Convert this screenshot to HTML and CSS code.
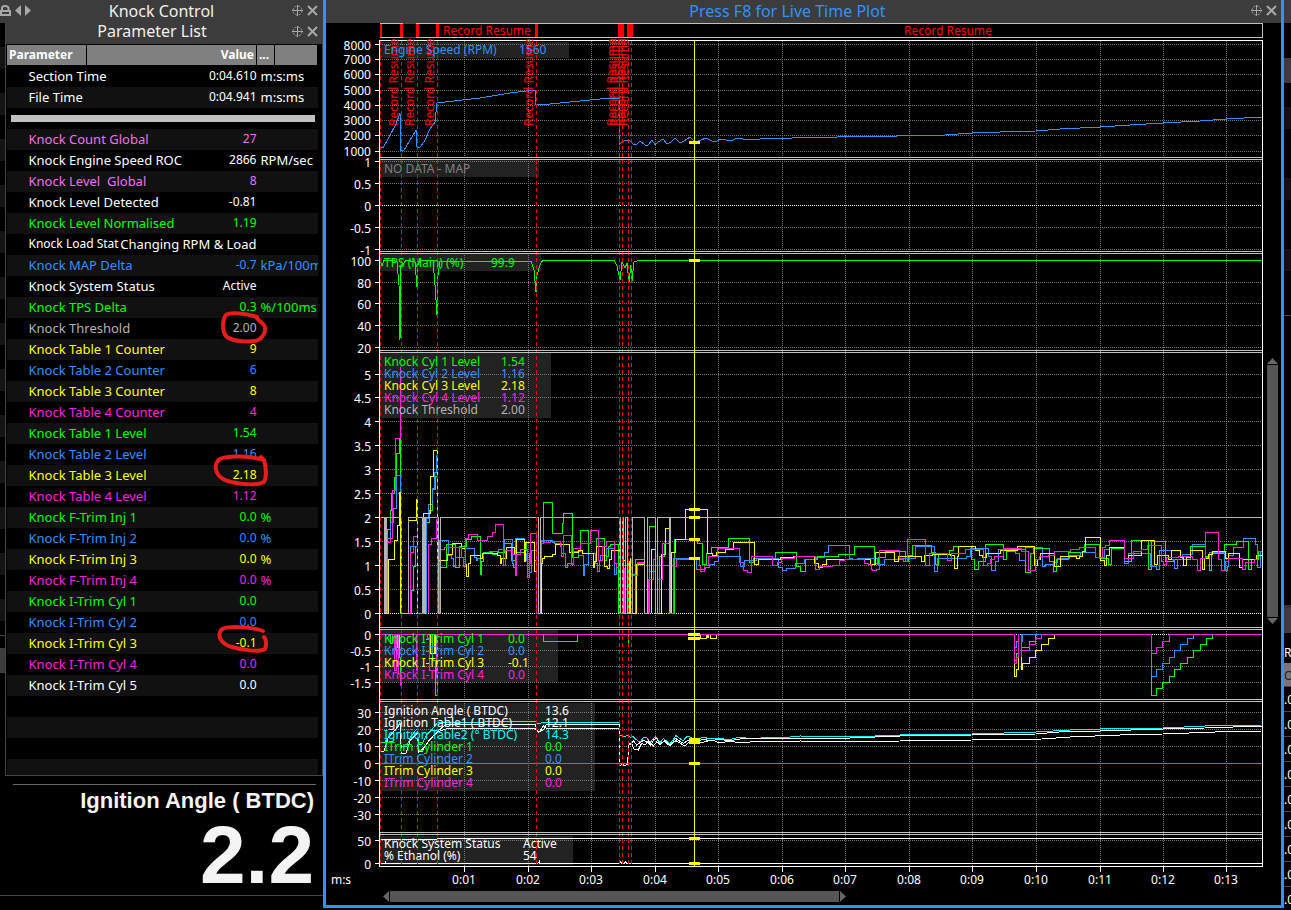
FILE: index.html
```
<!DOCTYPE html>
<html lang="en">
<head>
<meta charset="utf-8">
<title>Knock Control</title>
<link rel="stylesheet" href="styles.css">
</head>
<body>
<svg class="defs" aria-hidden="true">
  <symbol id="move" viewBox="0 0 11 11"><circle cx="5.5" cy="5.5" r="4.5" stroke-dasharray="2 1.5"/><path d="M5.5 0V11M0 5.5H11"/></symbol>
  <symbol id="close" viewBox="0 0 11 11"><path class="thick" d="M1 1L10 10M10 1L1 10"/></symbol>
</svg>
<div class="app">
  <aside class="side">
    <header class="bar">
      <span class="nav">
        <button aria-label="Lock"><svg class="icon" viewBox="0 0 11 11"><path class="thick" d="M2 5V3Q2 1 5 1T8.500 3V5"/><path class="solid" d="M0 5H11V11H0ZM2 7V9H9V7Z" fill-rule="evenodd"/></svg></button>
        <button aria-label="Previous"><svg class="arrow" viewBox="0 0 6 11"><path class="solid" d="M6 0V11L0 5.500Z"/></svg></button>
        <button aria-label="Next"><svg class="arrow" viewBox="0 0 6 11"><path class="solid" d="M0 0V11L6 5.500Z"/></svg></button>
      </span>
      <h1>Knock Control</h1>
      <span class="tools"><button aria-label="Move"><svg class="icon"><use href="#move"/></svg></button><button aria-label="Close"><svg class="icon"><use href="#close"/></svg></button></span>
    </header>
    <div class="side-body">
      <div class="sliver"></div>
      <div class="side-main">
        <section class="params">
          <header class="bar sub">
            <span></span>
            <h2>Parameter List</h2>
            <span class="tools"><button aria-label="Move list"><svg class="icon"><use href="#move"/></svg></button><button aria-label="Close list"><svg class="icon"><use href="#close"/></svg></button></span>
          </header>
          <table class="list">
            <colgroup><col class="c1"><col><col class="c3"><col class="c4"></colgroup>
            <thead><tr><th>Parameter</th><th class="right">Value</th><th>...</th><th></th></tr></thead>
            <tbody>
              <tr><td>Section Time</td><td>0:04.610</td><td colspan="2">m:s:ms</td></tr>
              <tr><td>File Time</td><td>0:04.941</td><td colspan="2">m:s:ms</td></tr>
              <tr><td colspan="4" class="sep"><hr></td></tr>
              <tr class="violet"><td>Knock Count Global</td><td>27</td><td colspan="2"></td></tr>
              <tr><td>Knock Engine Speed ROC</td><td>2866</td><td colspan="2">RPM/sec</td></tr>
              <tr class="violet"><td>Knock Level&nbsp; Global</td><td>8</td><td colspan="2"></td></tr>
              <tr><td>Knock Level Detected</td><td>-0.81</td><td colspan="2"></td></tr>
              <tr class="green"><td>Knock Level Normalised</td><td>1.19</td><td colspan="2"></td></tr>
              <tr class="wide-value"><td>Knock Load Stat</td><td>Changing RPM &amp; Load</td><td colspan="2"></td></tr>
              <tr class="blue"><td>Knock MAP Delta</td><td>-0.7</td><td colspan="2">kPa/100ms</td></tr>
              <tr><td>Knock System Status</td><td>Active</td><td colspan="2"></td></tr>
              <tr class="green"><td>Knock TPS Delta</td><td>0.3</td><td colspan="2">%/100ms</td></tr>
              <tr class="grey"><td>Knock Threshold</td><td>2.00</td><td colspan="2"></td></tr>
              <tr class="yellow"><td>Knock Table 1 Counter</td><td>9</td><td colspan="2"></td></tr>
              <tr class="blue"><td>Knock Table 2 Counter</td><td>6</td><td colspan="2"></td></tr>
              <tr class="yellow"><td>Knock Table 3 Counter</td><td>8</td><td colspan="2"></td></tr>
              <tr class="magenta"><td>Knock Table 4 Counter</td><td>4</td><td colspan="2"></td></tr>
              <tr class="green"><td>Knock Table 1 Level</td><td>1.54</td><td colspan="2"></td></tr>
              <tr class="blue"><td>Knock Table 2 Level</td><td>1.16</td><td colspan="2"></td></tr>
              <tr class="yellow"><td>Knock Table 3 Level</td><td>2.18</td><td colspan="2"></td></tr>
              <tr class="magenta"><td>Knock Table 4 Level</td><td>1.12</td><td colspan="2"></td></tr>
              <tr class="green"><td>Knock F-Trim Inj 1</td><td>0.0</td><td colspan="2">%</td></tr>
              <tr class="blue"><td>Knock F-Trim Inj 2</td><td>0.0</td><td colspan="2">%</td></tr>
              <tr class="yellow"><td>Knock F-Trim Inj 3</td><td>0.0</td><td colspan="2">%</td></tr>
              <tr class="magenta"><td>Knock F-Trim Inj 4</td><td>0.0</td><td colspan="2">%</td></tr>
              <tr class="green"><td>Knock I-Trim Cyl 1</td><td>0.0</td><td colspan="2"></td></tr>
              <tr class="blue"><td>Knock I-Trim Cyl 2</td><td>0.0</td><td colspan="2"></td></tr>
              <tr class="yellow"><td>Knock I-Trim Cyl 3</td><td>-0.1</td><td colspan="2"></td></tr>
              <tr class="magenta"><td>Knock I-Trim Cyl 4</td><td>0.0</td><td colspan="2"></td></tr>
              <tr><td>Knock I-Trim Cyl 5</td><td>0.0</td><td colspan="2"></td></tr>
              <tr><td colspan="4"></td></tr>
              <tr><td colspan="4"></td></tr>
              <tr><td colspan="4"></td></tr>
              <tr class="short"><td colspan="4"></td></tr>
            </tbody>
          </table>
          <svg class="marks" viewBox="206 300 70 360" aria-hidden="true">
            <path d="M257 317C245 313 230 312 226 315C222 320 222 333 227 337C234 342 255 343 260 339C266 333 267 327 262 323C258 320 257 318 256 317"/>
            <path d="M261 457L264 460C266 467 267 477 264 482C254 487 230 483 223 479C215 474 213 464 220 459C229 455 251 456 264 460"/>
            <path d="M263 631C250 626 225 626 221 630C216 638 224 645 232 647C245 651 260 652 265 649C267 644 266 639 264 637"/>
          </svg>
        </section>
        <section class="gauge">
          <h2>Ignition Angle ( BTDC)</h2>
          <output>2.2</output>
        </section>
      </div>
    </div>
    <div class="side-foot"></div>
  </aside>

  <main class="window">
    <header class="bar">
      <span></span>
      <h1 class="live">Press F8 for Live Time Plot</h1>
      <span class="tools"><button aria-label="Move plot"><svg class="icon"><use href="#move"/></svg></button><button aria-label="Close plot"><svg class="icon"><use href="#close"/></svg></button></span>
    </header>
    <div class="plot-row">
      <svg class="plot" viewBox="326 23 938 866" role="img" aria-label="Time plot">
        <g class="shade">
          <path d="M380 42H569V58H380ZM380 160H539V177H380ZM380 254H541V271H380ZM380 353H551V418H380ZM380 630H558V682H380ZM380 703H595V791H380ZM380 836H573V865H380Z"/>
        </g>
        <path class="grid" d="M380 44.500H1262M380 59.500H1262M380 74.500H1262M380 90.500H1262M380 105.500H1262M380 120.500H1262M380 135.500H1262M380 151.500H1262M380 161.500H1262M380 183.500H1262M380 227.500H1262M380 249.500H1262M380 282.500H1262M380 303.500H1262M380 325.500H1262M380 347.500H1262M380 374.500H1262M380 397.500H1262M380 421.500H1262M380 445.500H1262M380 469.500H1262M380 493.500H1262M380 541.500H1262M380 565.500H1262M380 589.500H1262M380 650.500H1262M380 666.500H1262M380 682.500H1262M380 712.500H1262M380 729.500H1262M380 746.500H1262M380 780.500H1262M380 797.500H1262M380 814.500H1262M380 840.500H1262"/>
        <path class="grid" d="M464.500 41V866M528.500 41V866M591.500 41V866M655.500 41V866M718.500 41V866M782.500 41V866M845.500 41V866M909.500 41V866M972.500 41V866M1036.500 41V866M1100.500 41V866M1163.500 41V866M1226.500 41V866"/>
        <path class="zero" d="M380 205.500H1262M380 613.500H1262M380 634.500H1262"/>

        <g class="line">
          <path class="blue" d="M380 147L383 148L388 139L396 124L400 113L401 150L404 150L409 142L416 130L417 147L420 147L424 142L430 129L435 122L437 103L445 102L480 98L510 93L535 90L536 105L550 104L580 101L600 99L619 98L620 144L624 141L629 140L633 144L636 145L640 141L645 145L648 145L652 140L655 145L658 142L663 139L667 144L671 142L675 138L680 143L684 141L690 137L695 142L701 140L706 138L714 142L722 139L730 141L738 138L748 140L760 139L775 138L785 139L800 137L825 138L850 136L880 137L915 135L945 135L972 133L1000 132L1036 131L1060 129L1100 127L1130 125L1163 123L1200 121L1226 119L1262 117"/>
          <path class="green" d="M380 260L382 266L384 260H393L397 262L399 285L400 340L401 265L404 263L406 260L415 262L417 287L418 265L421 260H433L435 285L437 315L438 275L440 261H531L534 270L536 292L537 275L540 265L543 260H614L617 266L620 280L622 262L625 268L627 263L629 282L631 265L632 281L634 262L640 260H1262"/>
          <path class="magenta" d="M400.500 367V614"/>
        </g>

        <svg x="360" y="420" width="330" height="210" viewBox="0 0 990 630" class="line">
          <path class="green" d="M75 580H82V328H90V272H95V220H103V172H110V100H119V55H122V580H155V510H160V438H167V380H172V580H198V306H207V270H218V208H226V170H232V442H258V374H286V442H297V380H318V358H334V348H361V463H364V424H369V398H397V404H412V398H434V370H455V422H465V398H492V390H500V366H524V420H530V580H541V370H550V247H577V340H607V310H610V280H637V412H655V394H661V331H686V400H709V355H733V422H738V408H744V378H751V373H776V580M804 580V424H811V580H826V418H853M868 580V319H886M898 580V408H913V370H930V580H943V358H990"/>
          <path class="blue" d="M80 580V355H92V306H101V265H110V166H120V580M150 580V380H172V580M200 580V295H206V253H217V206H223V156H228V106H232V580M238 580V361H266V407H274V415H280V439H286V412H316V385H343V412H349V421H353V415H370V400H388V394H416V388H433V358H457V430H460V442H466V355H494V420H500V400H508V457H514V390H528V580H544V361H577V367H583V370H604V400H616V442H622V430H640V395H655V405H670V466H674V433H686V400H705V430H712V454H718V420H722V406H740V386H763V463H770V430H778V580H817V463H832V430H853M868 580V454H886M898 580V436H928V580H940V415H990"/>
          <path class="yellow" d="M72 580H86V418H103V360H112V316H118V217H120V580M122 580V217M146 580V301H169V238H172V580M190 580V280H210V169H220V91H232V422H263V403H277V370H304V385H316V433H320V469H325V430H331V406H361V415H367V400H412V406H421V430H424V415H440V382H464V403H469V358H494V424H497V367H524V455H530V580H544V430H547V415H553V409H577V403H586V373H628V397H655V391H668V400H701V442H704V424H709V379H734V439H741V445H747V418H755V391H778V580M787 376V580M789 420H797V580M807 424V580M811 415V580M814 580H829V433H853M874 580V388H886M892 580H904V404H916V325H928V580H935V397H947V358H976V268H990"/>
          <path class="magenta" d="M82 367H90V355H97V211H107V55H122M152 580V397H160V349H172M206 580V373H214V355H229V298H235V388H253V382H304V412H310V439H316V355H325V343H352V361H382V349H397V337H406V313H431V436H437V391H458V403H466V466H470V403H480V389H502V472H508V430H511V340H529V580H541V430V370H550V367H571V364H600V380H604V409H610V346H635V433H640V385H662V370H691V331H716V420H727V380H740V364H763V430H770V442H778V580H782M792 580V445H796V580M801 580V460M820 466H832V427H853M865 580V478H880V418H886M892 478H908V370H928V580H940V439H950V418H990"/>
          <path class="grey" d="M60 292H72V580M75 292V580M78 292V580M78 292H124V580H146V292H187V580M190 292V580M193 292V580H196V292H235V580H241V292H535V580H541V292H778V580M781 292V580M786 580V292M790 292V580H797V292H802V580H817V292H853V580H862V292H886V580H892V292H928V580M931 580V292H990"/>
        </svg>
        <svg x="690" y="440" width="280" height="260" viewBox="150 0 840 780" class="line">
          <path class="green" d="M150 298H172V310H187V373H199V340H214V322H265V295H328V367H341V355H406V337H469V379H481V394H496V358H532V349H595V343H643V319H703V370H715V352H736V334H796V364H805V346H817V316H874V338H886V373H895V343H928V331H940V319H990"/>
          <path class="blue" d="M150 355H169V388H196V382H208V373H223V364H235V349H301V379H313V361H349V355H415V382H427V391H439V385H466V370H493V358H530V352H553V337H565V316H628V355H640M652 355H712V373H733V358H790V355H826V319H883V394H892V355H979V349H990"/>
          <path class="yellow" d="M150 208H202V340H217V346H229V337H256V328H280V307H343V373H355V358H421V352H460V349H523V370H535V382H547V373H559V358H691V373H706V337H763V364H775V349H844V364H853V346H877V343H931V346H943V385H952V349H955V319H990M181 583V595H200V583M203 583V595M206 583V595M211 583V595H229V583"/>
          <path class="magenta" d="M150 358H178V376H181V394H193V376H205V349H232V325H298V367H310V391H322V397H334V349H397V376H412V367H424V355H463V349H526V388H538V379H577V376H598V361H613V358H673V370H685V373H694V388H697V391H709V388H718V331H778V355H790V364H802V298H856V376H868V340H922V361H934V340H976V328H990"/>
        </svg>
        <svg x="970" y="500" width="292" height="220" viewBox="30 0 876 660" class="line">
          <path class="green" d="M30 139H34V178H43V208H55V184H76V133H130V178H139V154H150V148H196V217H211V160H220V145H268V184H280V214H290V178H325V157H373V133H418V175H445V193H453V145H494V184H514V121H565V208H574V124H616V184H640V178H691V139H736V170H748V211H754V160H793V133H829V124H865V208H874V178H895V154H905"/>
          <path class="blue" d="M30 169H32V145H85V170H94V211H106V184H115V148H150V154H165V160H178V181H196V142H247V199H257V193H280V187H292V175H328V166H361V157H406V172H432V148H448V142H492V190H504V160H571V199H589V208H598V151H634V178H643V205H652V178H668V163H697V133H736V172H748V157H793V211H802V200H805V166H820V142H850V115H886V134H892V202H901V154H905"/>
          <path class="yellow" d="M30 139H46V152H58V166H68V172H79V160H121V151H172V139H224V196H233V178H242V160H283V199H301V169H349V175H358V169H367V154H376V112H421V181H432V196H439V166H448V142H494V175H506V166H544V121H583V193H592V166H625V178H634V151H661V172H670V196H679V172H691V151H727V208H733V175H745V163H757V154H796V175H805V160H838V202H847V178H889V166H905"/>
          <path class="magenta" d="M30 148H70V196H83V190H91V178H103V169H130V145H185V154H205V211H226V178H238V169H265V166H283V154H331V148H358V142H406V172H427V142H436V136H448V121H493V175H520V154H544V148H562V136H604V184H610V193H619V172H655V169H697V178H712V211H721V175H736V97H776V178H784V211H796V184H805V175H847V208H856V187H883V178H892V154H905"/>
          <path class="yellow" d="M163 403V529H169V508H175V430M184 403V508H187V490H208V472H226V451H245V433H265V415H284V403"/>
          <path class="green" d="M163 403V480H169V460H175M184 442H208V424H226V403M574 403V586H589V565H607V547H628V529H643V508H661V490H682V472H700V451H721V433H739V415H757V403"/>
          <path class="blue" d="M163 442H169V424H175M184 424H187V403H245M574 403V529H589V508H607V490H628V472H643V451H661V433H682V415H700V403"/>
          <path class="magenta" d="M30 403H163V490H169V472H175V403M184 403V472V451H208V433H226V415H245V403H574V460H589V442H607V424H628V403H905"/>
        </svg>
        <svg x="360" y="620" width="330" height="250" viewBox="0 0 990 750" class="line">
          <path class="green" d="M92 43V70H98V43H104V75H110V43M118 43V112H120V187M550 43V65H653V43M805 43V75M216 43V120H226V227H232V43"/>
          <path class="blue" d="M107 43V90H113M203 43V56H208V100M228 43V170H231"/>
          <path class="yellow" d="M112 43V82H118V43M169 43V75M211 43V100H230M222 43V100M227 43V100"/>
          <path class="magenta" d="M103 43V150H110V43M116 43V160H121V197H124V43M168 43V150H172V43M208 43V150H223M229 43V155"/>
          <path class="cyan" d="M60 367H74L90 345L106 330L120 308L124 380H140L152 350L172 325L175 372H186L200 345L215 330L232 308L300 307L528 304L532 312L550 307H778V346H784L795 350L804 345L812 352L820 350L830 360L840 366L850 353L860 352L870 368L880 355L888 350L900 368L910 356L918 362L930 371L940 358L948 347L960 356L970 362L980 350L990 350"/>
          <path class="white" d="M60 393H72L84 355L105 330L121 311L124 400H138L150 362L172 340L175 395H186L204 365L232 335L258 312H525L531 330L536 336L550 330L560 312H778V437L786 433L795 437L803 433L806 370H814L820 362L830 375L840 368L850 361L862 365L872 375L882 358L890 355L900 375L912 364L930 378L946 355L970 370L990 358"/>
          <path class="white" d="M175 398L190 385L215 352L235 335L262 326H525L537 337L550 318L560 326H778M806 375L816 372L822 388L835 390L845 370L855 375L865 362L880 378L890 366L900 372L915 361L930 376L948 362L975 378L990 364"/>
          <path class="white" d="M60 658H232V655H990M60 731H75V724L78 731H532L538 724L540 731H778L780 724L786 731H793L796 724L800 731H990"/>
        </svg>
        <g class="line">
          <path class="magenta" d="M380 634.500H970M380 763.500H1262"/>
          <path class="cyan" d="M690 737L696 740L703 737L710 739L720 738L728 740L740 737L752 739L770 737L780 738L800 736L850 737L900 735L972 734L1036 732L1070 730L1100 729L1163 728L1205 726L1262 725"/>
          <path class="white" d="M690 739L696 742L703 739L710 741L720 739L728 741L740 739L770 738L800 738L850 738L900 736L972 735L1036 734L1070 731L1100 731L1163 729L1205 728L1262 726"/>
          <path class="white" d="M690 741L700 743L712 740L720 743L730 741L740 743L760 741L780 742L800 741L850 742L900 741L972 740L1042 739L1070 737L1120 735L1163 734L1215 732L1262 731M690 838.500H1262M690 863.500H1262"/>
          <path class="grey" d="M690 517.500H1262"/>
        </g>

        <path class="cut" d="M380.500 41V866M401.500 41V866M417.500 41V866M437.500 41V866M536.500 41V866M619.500 41V866M622.500 41V866M628.500 41V866M631.500 41V866"/>
        <g class="frame">
          <path d="M380 23.500H1262.500V37.500H380ZM380 157.500H1262M380 159.500H1262M380 251.500H1262M380 253.500H1262M380 350.500H1262M380 352.500H1262M380 627.500H1262M380 629.500H1262M380 699.500H1262M380 701.500H1262M380 832.500H1262M380 834.500H1262"/>
          <path class="white" d="M379.500 40.500H1262.500V866.500H379.500ZM375 44.500H379M375 59.500H379M375 74.500H379M375 90.500H379M375 105.500H379M375 120.500H379M375 135.500H379M375 151.500H379M375 161.500H379M375 183.500H379M375 205.500H379M375 227.500H379M375 249.500H379M375 260.500H379M375 282.500H379M375 303.500H379M375 325.500H379M375 347.500H379M375 374.500H379M375 397.500H379M375 421.500H379M375 445.500H379M375 469.500H379M375 493.500H379M375 517.500H379M375 541.500H379M375 565.500H379M375 589.500H379M375 613.500H379M375 634.500H379M375 650.500H379M375 666.500H379M375 682.500H379M375 712.500H379M375 729.500H379M375 746.500H379M375 763.500H379M375 780.500H379M375 797.500H379M375 814.500H379M375 840.500H379M375 863.500H379"/>
          <path class="white" d="M464.500 867V872M528.500 867V872M591.500 867V872M655.500 867V872M718.500 867V872M782.500 867V872M845.500 867V872M909.500 867V872M972.500 867V872M1036.500 867V872M1100.500 867V872M1163.500 867V872M1226.500 867V872"/>
        </g>
        <path class="events" d="M380 24H382V37H380ZM400 24H403V37H400ZM416 24H419V37H416ZM436 24H439V37H436ZM535 24H538V37H535ZM618 24H624V37H618ZM627 24H633V37H627ZM403 23H416V24H403ZM403 37H416V38H403Z"/>
        <path class="cursor" d="M694 41H695V866H694ZM689 141H700V144H689ZM689 259H700V262H689ZM689 508H700V511H689ZM689 516H700V519H689ZM689 538H700V541H689ZM689 557H700V560H689ZM688 633H700V636H688ZM688 637H700V640H688ZM689 738H700V744H689ZM689 762H700V765H689ZM689 837H700V840H689ZM689 862H700V865H689Z"/>

        <g class="red">
          <text x="443" y="35">Record Resume</text><text x="904" y="35">Record Resume</text>
          <text transform="translate(398 126) rotate(-90)">Record Resume</text>
          <text transform="translate(414 126) rotate(-90)">Record Resume</text>
          <text transform="translate(434 126) rotate(-90)">Record Resume</text>
          <text transform="translate(533 126) rotate(-90)">Record Resume</text>
          <text transform="translate(616 126) rotate(-90)">Record Resume</text>
          <text transform="translate(619 126) rotate(-90)">Record Resume</text>
          <text transform="translate(625 126) rotate(-90)">Record Resume</text>
          <text transform="translate(628 126) rotate(-90)">Record Resume</text>
        </g>
        <g class="legend">
          <text class="blue" x="384" y="54">Engine Speed (RPM)</text><text class="blue" x="519" y="54">1560</text>
          <text class="dim" x="384" y="173">NO DATA - MAP</text>
          <text class="green" x="384" y="267">TPS (Main) (%)</text><text class="green" x="491" y="267">99.9</text>
          <text class="green" x="384" y="366">Knock Cyl 1 Level</text><text class="green" x="501" y="366">1.54</text>
          <text class="blue" x="384" y="378">Knock Cyl 2 Level</text><text class="blue" x="501" y="378">1.16</text>
          <text class="yellow" x="384" y="390">Knock Cyl 3 Level</text><text class="yellow" x="501" y="390">2.18</text>
          <text class="magenta" x="384" y="402">Knock Cyl 4 Level</text><text class="magenta" x="501" y="402">1.12</text>
          <text class="grey" x="384" y="414">Knock Threshold</text><text class="grey" x="501" y="414">2.00</text>
          <text class="green" x="384" y="643">Knock I-Trim Cyl 1</text><text class="green" x="508" y="643">0.0</text>
          <text class="blue" x="384" y="655">Knock I-Trim Cyl 2</text><text class="blue" x="508" y="655">0.0</text>
          <text class="yellow" x="384" y="667">Knock I-Trim Cyl 3</text><text class="yellow" x="508" y="667">-0.1</text>
          <text class="magenta" x="384" y="679">Knock I-Trim Cyl 4</text><text class="magenta" x="508" y="679">0.0</text>
          <text class="white" x="384" y="715">Ignition Angle ( BTDC)</text><text class="white" x="545" y="715">13.6</text>
          <text class="white" x="384" y="727">Ignition Table1 ( BTDC)</text><text class="white" x="545" y="727">12.1</text>
          <text class="cyan" x="384" y="739">Ignition Table2 (° BTDC)</text><text class="cyan" x="545" y="739">14.3</text>
          <text class="green" x="384" y="751">ITrim Cylinder 1</text><text class="green" x="545" y="751">0.0</text>
          <text class="blue" x="384" y="763">ITrim Cylinder 2</text><text class="blue" x="545" y="763">0.0</text>
          <text class="yellow" x="384" y="775">ITrim Cylinder 3</text><text class="yellow" x="545" y="775">0.0</text>
          <text class="magenta" x="384" y="787">ITrim Cylinder 4</text><text class="magenta" x="545" y="787">0.0</text>
          <text class="white" x="384" y="848">Knock System Status</text><text class="white" x="523" y="848">Active</text>
          <text class="white" x="384" y="860">% Ethanol (%)</text><text class="white" x="523" y="860">54</text>
        </g>
        <g class="ylab">
          <text x="371" y="50">8000</text><text x="371" y="64">7000</text><text x="371" y="79">6000</text><text x="371" y="95">5000</text><text x="371" y="110">4000</text><text x="371" y="125">3000</text><text x="371" y="140">2000</text><text x="371" y="156">1000</text>
          <text x="371" y="167">1</text><text x="371" y="189">0.5</text><text x="371" y="211">0</text><text x="371" y="233">-0.5</text><text x="371" y="255">-1</text>
          <text x="371" y="266">100</text><text x="371" y="288">80</text><text x="371" y="309">60</text><text x="371" y="331">40</text><text x="371" y="353">20</text>
          <text x="371" y="380">5</text><text x="371" y="403">4.5</text><text x="371" y="427">4</text><text x="371" y="451">3.5</text><text x="371" y="475">3</text><text x="371" y="499">2.5</text><text x="371" y="523">2</text><text x="371" y="547">1.5</text><text x="371" y="571">1</text><text x="371" y="595">0.5</text><text x="371" y="619">0</text>
          <text x="371" y="640">0</text><text x="371" y="656">-0.5</text><text x="371" y="672">-1</text><text x="371" y="688">-1.5</text>
          <text x="371" y="718">30</text><text x="371" y="735">20</text><text x="371" y="752">10</text><text x="371" y="769">0</text><text x="371" y="786">-10</text><text x="371" y="803">-20</text><text x="371" y="820">-30</text>
          <text x="371" y="846">50</text><text x="371" y="869">0</text>
        </g>
        <g class="xlab">
          <text x="341" y="884">m:s</text><text x="464" y="884">0:01</text><text x="528" y="884">0:02</text><text x="591" y="884">0:03</text><text x="655" y="884">0:04</text><text x="718" y="884">0:05</text><text x="782" y="884">0:06</text><text x="845" y="884">0:07</text><text x="909" y="884">0:08</text><text x="972" y="884">0:09</text><text x="1036" y="884">0:10</text><text x="1100" y="884">0:11</text><text x="1163" y="884">0:12</text><text x="1226" y="884">0:13</text>
        </g>
      </svg>
      <div class="vscroll"><i class="tip up"></i><i class="thumb"></i><i class="tip down"></i></div>
    </div>
    <div class="hscroll"><i class="tip left"></i><i class="thumb"></i><i class="tip rightward"></i></div>
  </main>

  <aside class="edge">
    <div class="edge-top"></div>
    <div class="edge-list"></div>
    <div class="edge-gap"></div>
    <div class="edge-head"></div>
    <div class="edge-label">RPM</div>
    <div class="edge-row current">OV</div>
    <div class="edge-row">.0</div><div class="edge-row">.0</div><div class="edge-row">.0</div><div class="edge-row">.0</div><div class="edge-row">.0</div><div class="edge-row">.0</div><div class="edge-row">.0</div><div class="edge-row">.0</div><div class="edge-row">.0</div>
  </aside>
</div>
</body>
</html>
```
FILE: styles.css
```
* { box-sizing: border-box; }
body {
  margin: 0;
  background: #000;
  color: #fff;
  font: 12px/20px "Noto Sans", "Open Sans", sans-serif;
  overflow: hidden;
}
button { border: 0; padding: 0; background: none; display: flex; }
.defs { position: absolute; width: 0; height: 0; }
.app { display: flex; height: 100vh; overflow: hidden; }

.bar {
  display: grid;
  grid-template-columns: 1fr auto 1fr;
  align-items: center;
  height: 23px;
  padding-bottom: 2px;
  background: #3c3c3c;
}
.bar h1, .bar h2 { margin: 0; font-size: 16px; font-weight: 400; line-height: 20px; color: #f0f0f0; }
.bar .live { color: #3291ff; padding-right: 32px; }
.nav { display: flex; gap: 4px; }
.tools { display: flex; gap: 4px; justify-content: flex-end; padding-right: 5px; }
.icon { width: 11px; height: 11px; fill: none; stroke: #a8a8a8; }
.arrow { width: 6px; height: 11px; }
.thick { stroke-width: 2; }
.solid { fill: #a8a8a8; stroke: none; }

.side { flex: 0 0 323px; display: flex; flex-direction: column; min-width: 0; }
.side-body { flex: 1; display: flex; }
.side-foot { height: 15px; border-top: 1px solid #444; }
.sliver {
  flex: 0 0 5px;
  background:
    linear-gradient(transparent 598px, #000 598px 612px, #444 612px 613px, #000 613px 625px, #3c3c3c 625px 650px, #000 650px),
    repeating-linear-gradient(#000 0 24px, #141414 24px 46px);
}
.side-main { flex: 1; min-width: 0; }
.params { position: relative; border: 1px solid #444; border-top: 0; height: 753px; }
.sub { height: 21px; padding-bottom: 5px; }
.sub h2 { padding-right: 24px; line-height: 16px; }
.sub .tools { padding-right: 4px; }

.list { width: 312px; border-collapse: collapse; table-layout: fixed; }
.list .c1 { width: 80px; }
.list .c3 { width: 18px; }
.list .c4 { width: 43px; }
.list th {
  height: 20px;
  padding: 0 2px;
  line-height: 18px;
  background: #808080;
  border: 1px solid #000;
  text-align: left;
}
.list th.right { text-align: right; }
.list tr { height: 21px; }
.list td { height: 21px; padding: 0; white-space: nowrap; line-height: 20px; font-size: 13px; }
.list td:first-child { padding-left: 22px; }
.list td:nth-child(2) { text-align: right; font-size: 12px; }
.list td:nth-child(3) { padding-left: 4px; overflow: hidden; }
.list .wide-value td:first-child { font-size: 12px; }
.list .wide-value td:nth-child(2) { font-size: 13px; }
.list tbody tr:nth-child(even) { background: #111; }
.list td.sep { padding: 0 3px 0 4px; }
.list hr { height: 7px; margin: 0; border: 0; background: #c0c0c0; }
.list .short, .list .short td { height: 16px; line-height: 15px; }
.marks {
  position: absolute;
  left: 200px;
  top: 277px;
  width: 70px;
  height: 360px;
  fill: none;
  stroke: #e81c1c;
  stroke-width: 4;
  stroke-linecap: round;
  stroke-linejoin: round;
}

.gauge { margin: 8px 7px 0 8px; padding-right: 2px; border-top: 1px solid #666; text-align: right; font-family: "Liberation Sans", Arial, sans-serif; font-weight: 700; color: #f4f4f4; }
.gauge h2 { margin: 0; font-size: 22px; line-height: 32px; }
.gauge output { display: block; font-size: 82px; line-height: 76px; }

.window { flex: 1; min-width: 0; display: flex; flex-direction: column; border: 3px solid #3291ff; border-top: 0; margin-bottom: 2px; }
.window .tools { padding-right: 4px; }
.plot-row { display: flex; }
.plot { flex: 1; min-width: 0; height: auto; display: block; }
.vscroll { flex: 0 0 17px; display: flex; flex-direction: column; padding: 335px 3px 265px; gap: 1px; }
.hscroll { display: flex; gap: 1px; padding: 2px 435px 3px 57px; height: 16px; }
.thumb { flex: 1; background: #555; }
.tip { flex: 0 0 6px; background: #666; }
.up { clip-path: polygon(50% 0, 100% 100%, 0 100%); }
.down { clip-path: polygon(0 0, 100% 0, 50% 100%); }
.left { clip-path: polygon(100% 0, 100% 100%, 0 50%); }
.rightward { clip-path: polygon(0 0, 100% 50%, 0 100%); }

.plot text { fill: currentColor; }
.shade { fill: #222; }
.grid, .zero, .cut, .line path, .frame path { fill: none; shape-rendering: crispEdges; vector-effect: non-scaling-stroke; }
.grid { stroke: #777; stroke-dasharray: 1 1; }
.zero { stroke: #fff; stroke-dasharray: 1 1; }
.cut { stroke: #f00; stroke-dasharray: 4 3; }
.line path { stroke: currentColor; stroke-width: 1; }
.frame path { stroke: #c0c0c0; }
.frame .white { stroke: #fff; }
.events { fill: #f00; }
.cursor { fill: #ff0; shape-rendering: crispEdges; }
.ylab { text-anchor: end; }
.xlab { text-anchor: middle; }

.white { color: #fff; }
.red { color: #f00; }
.violet { color: #f070f0; }
.green { color: #0f0; }
.blue { color: #3291ff; }
.yellow { color: #ffff00; }
.magenta { color: #ff20e0; }
.cyan { color: #00ffff; }
.grey { color: #b4b4b4; }
.dim { color: #808080; }

.edge { flex: 0 0 7px; overflow: hidden; display: flex; flex-direction: column; white-space: nowrap; }
.edge > div { flex: none; }
.edge-top { height: 58px; background: linear-gradient(#3c3c3c 23px, #000 23px); }
.edge-list { height: 258px; border-bottom: 1px solid #444; background: linear-gradient(#3c3c3c 25px, transparent 25px), repeating-linear-gradient(#000 0 49px, #111 49px 71px); }
.edge-gap { height: 292px; border-bottom: 3px solid #333; }
.edge-head { height: 25px; background: #3c3c3c; }
.edge-label { height: 30px; line-height: 40px; }
.edge-row { height: 25px; line-height: 25px; border-bottom: 1px solid #444; }
.edge-row.current { height: 24px; background: #777; color: #222; }
```
